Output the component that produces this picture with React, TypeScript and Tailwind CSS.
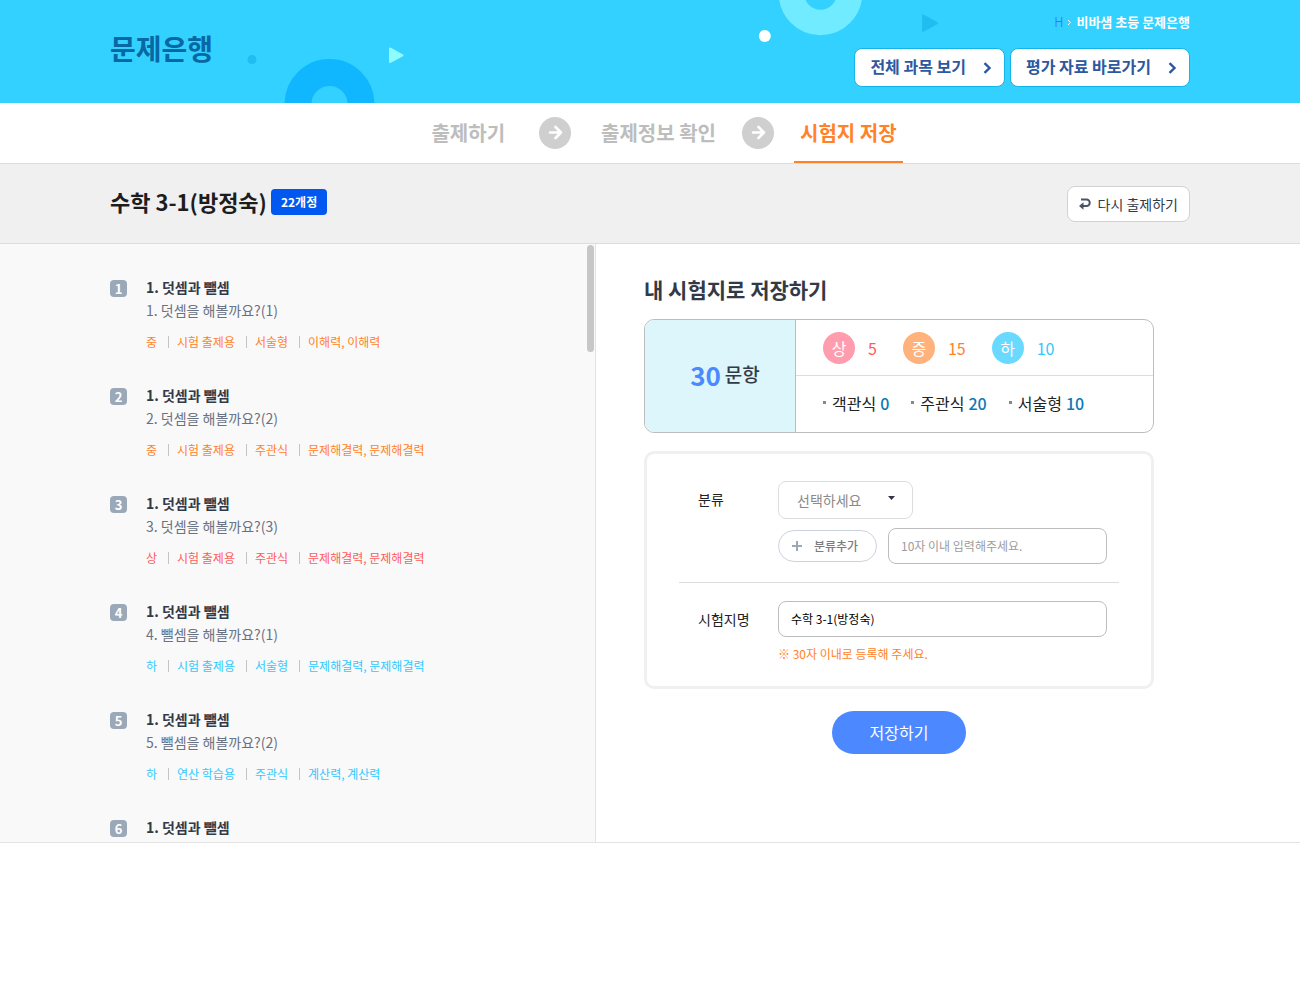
import { useState } from 'react';

type Level = '상' | '중' | '하';

interface Question {
  id: number;
  chapter: string;
  title?: string;
  level?: Level;
  tags?: string[];
}

const questions: Question[] = [
  { id: 1, chapter: '1. 덧셈과 뺄셈', title: '1. 덧셈을 해볼까요?(1)', level: '중', tags: ['시험 출제용', '서술형', '이해력, 이해력'] },
  { id: 2, chapter: '1. 덧셈과 뺄셈', title: '2. 덧셈을 해볼까요?(2)', level: '중', tags: ['시험 출제용', '주관식', '문제해결력, 문제해결력'] },
  { id: 3, chapter: '1. 덧셈과 뺄셈', title: '3. 덧셈을 해볼까요?(3)', level: '상', tags: ['시험 출제용', '주관식', '문제해결력, 문제해결력'] },
  { id: 4, chapter: '1. 덧셈과 뺄셈', title: '4. 뺄셈을 해볼까요?(1)', level: '하', tags: ['시험 출제용', '서술형', '문제해결력, 문제해결력'] },
  { id: 5, chapter: '1. 덧셈과 뺄셈', title: '5. 뺄셈을 해볼까요?(2)', level: '하', tags: ['연산 학습용', '주관식', '계산력, 계산력'] },
  { id: 6, chapter: '1. 덧셈과 뺄셈' },
];

const levelText: Record<Level, string> = {
  상: 'text-[#ff5c5c]',
  중: 'text-[#ff8229]',
  하: 'text-[#32c8ff]',
};

const levelBadge: Record<Level, string> = {
  상: 'bg-[#ff9dae]',
  중: 'bg-[#ffb27c]',
  하: 'bg-[#69d9ff]',
};

const levelCounts: { level: Level; count: number }[] = [
  { level: '상', count: 5 },
  { level: '중', count: 15 },
  { level: '하', count: 10 },
];

const typeCounts = [
  { name: '객관식', count: 0 },
  { name: '주관식', count: 20 },
  { name: '서술형', count: 10 },
];

// 헤더 배경 도형
function HeaderShapes() {
  return (
    <svg
      className="absolute left-1/2 top-0 -translate-x-1/2"
      width="1300"
      height="103"
      viewBox="0 0 1300 103"
      aria-hidden="true"
    >
      <circle cx="252" cy="59.5" r="4.5" fill="#1fbdf0" />
      <circle cx="329.5" cy="104" r="31.5" fill="none" stroke="#10b7ff" strokeWidth="27" />
      <path d="M390 48.5v13.5l12.5-6.7z" fill="#8ffbff" stroke="#8ffbff" strokeWidth="2" strokeLinejoin="round" />
      <circle cx="764.8" cy="36" r="6" fill="#fff" />
      <circle cx="820.5" cy="-6.5" r="29" fill="none" stroke="#70ebff" strokeWidth="25.5" />
      <path d="M923 15.5v15.5l14-7.8z" fill="#1fbdf0" stroke="#1fbdf0" strokeWidth="2" strokeLinejoin="round" />
    </svg>
  );
}

function HeaderButton({ label }: { label: string }) {
  return (
    <button
      type="button"
      className="flex h-[39px] items-center gap-[17px] rounded-lg border border-[#14b4e8] bg-white pl-[15px] pr-3 text-base leading-5 font-bold text-[#2d58a0]"
    >
      <span className="pb-[3px]">{label}</span>
      <svg width="9" height="12" viewBox="0 0 9 12" fill="none" aria-hidden="true">
        <path d="M1.5 1.2 6.5 6l-5 4.8" stroke="currentColor" strokeWidth="2.4" />
      </svg>
    </button>
  );
}

function StepArrow({ className }: { className: string }) {
  return (
    <svg className={className} width="32" height="32" viewBox="0 0 32 32" fill="none" aria-hidden="true">
      <circle cx="16" cy="16" r="16" fill="#cfcfcf" />
      <path
        d="M11 15.5h11M16.5 10l5.5 5.5-5.5 5.5"
        stroke="#fff"
        strokeWidth="2.6"
        strokeLinecap="round"
        strokeLinejoin="round"
      />
    </svg>
  );
}

function QuestionItem({ item }: { item: Question }) {
  return (
    <li className="flex h-[108px] items-start gap-[19px]">
      <span className="mt-1 flex h-[17px] w-[17px] shrink-0 items-center justify-center rounded bg-[#9aa8b8] text-[13px] font-bold leading-none text-white">
        {item.id}
      </span>
      <div>
        <strong className="block text-sm leading-[22px] font-bold text-[#333a47]">{item.chapter}</strong>
        {item.title && <p className="text-sm leading-6 text-[#6a7182]">{item.title}</p>}
        {item.level && (
          <ul className={`mt-[10px] flex items-center text-xs leading-5 ${levelText[item.level]}`}>
            <li>{item.level}</li>
            {item.tags?.map((tag) => (
              <li key={tag} className="flex items-center">
                <i className="ml-[11px] mr-2 h-3 w-px bg-[#c4c4c4]" />
                {tag}
              </li>
            ))}
          </ul>
        )}
      </div>
    </li>
  );
}

function App() {
  const [group, setGroup] = useState('');
  const [newGroup, setNewGroup] = useState('');
  const [paperName, setPaperName] = useState('수학 3-1(방정숙)');

  return (
    <div className="min-h-screen bg-white font-['Noto_Sans_CJK_KR',sans-serif] text-[#222]">
      <header className="relative overflow-hidden bg-[#33d1ff]">
        <HeaderShapes />
        <div className="relative mx-auto flex h-[103px] max-w-[1080px] justify-between">
          <h1 className="pt-7 text-[28px] leading-10 font-bold text-[#0768a3]">문제은행</h1>
          <div className="flex flex-col items-end pt-3">
            <nav className="flex items-center gap-1 text-[13px] leading-5" aria-label="현재 위치">
              <a href="#home" className="font-light text-[#2d6df6]">H</a>
              <svg width="5" height="7" viewBox="0 0 5 7" fill="none" aria-hidden="true">
                <path d="M1 1l2.5 2.5L1 6" stroke="#fff" />
              </svg>
              <a href="#bank" className="font-bold text-white">비바샘 초등 문제은행</a>
            </nav>
            <div className="mt-4 flex gap-[5px]">
              <HeaderButton label="전체 과목 보기" />
              <HeaderButton label="평가 자료 바로가기" />
            </div>
          </div>
        </div>
      </header>

      <ol className="flex h-[61px] items-stretch justify-center border-b border-[#ddd] pl-7 text-xl font-bold text-[#bdbdbd]">
        <li className="flex items-center px-1.5">출제하기</li>
        <li className="flex items-center">
          <StepArrow className="ml-7 mr-6" />
        </li>
        <li className="flex items-center px-1.5">출제정보 확인</li>
        <li className="flex items-center">
          <StepArrow className="mx-5" />
        </li>
        <li className="flex items-center border-b-2 border-[#ff8229] px-1.5 pt-0.5 text-[#ff8229]" aria-current="step">
          시험지 저장
        </li>
      </ol>

      <div className="border-b border-[#ddd] bg-[#f0f0f0]">
        <div className="mx-auto flex h-[79px] max-w-[1080px] items-center justify-between">
          <div className="flex items-center gap-1 pb-1">
            <h2 className="text-[22px] font-bold text-[#1d1d1d]">수학 3-1(방정숙)</h2>
            <span className="rounded bg-[#0058f0] px-2.5 text-xs leading-[26px] font-bold text-white">22개정</span>
          </div>
          <button
            type="button"
            className="flex h-9 items-center gap-[7px] rounded-lg border border-[#d2d2d2] bg-white px-[11px] text-sm text-[#333a47]"
          >
            <svg width="12" height="12" viewBox="0 0 12 12" fill="none" aria-hidden="true">
              <path d="M2 1.5h5.5a3 3 0 0 1 0 6.5H3" stroke="#4a5265" strokeWidth="2" />
              <path d="M0 8l4.5-3.8v7.6z" fill="#4a5265" />
            </svg>
            다시 출제하기
          </button>
        </div>
      </div>

      <main className="grid grid-cols-[minmax(0,596fr)_minmax(0,704fr)] border-b border-[#e3e3e3]">
        <section className="relative border-r border-[#e3e3e3] bg-[#f9f9f9]" aria-label="문항 목록">
          <ul className="h-[598px] overflow-y-auto pl-[max(20px,calc(50vw-540px))] pt-8 [scrollbar-width:none]">
            {questions.map((item) => (
              <QuestionItem key={item.id} item={item} />
            ))}
          </ul>
          <div className="absolute right-px top-px h-[107px] w-[7px] rounded-full bg-[#c7c7c7]" />
        </section>

        <section className="max-w-[558px] pl-12 pt-8">
          <h3 className="text-[21px] leading-[26px] font-bold text-[#333a47]">내 시험지로 저장하기</h3>

          <div className="mt-[17px] flex overflow-hidden rounded-[10px] border border-[#bdbdbd]">
            <div className="flex w-[151px] items-center justify-center gap-1 border-r border-[#bdbdbd] bg-[#dcf6fb] pb-1 pl-2.5 text-[19px] font-medium text-[#333a47]">
              <strong className="text-[26px] font-bold text-[#4c88ff]">30</strong>
              문항
            </div>
            <div className="flex-1">
              <ul className="flex h-14 items-center gap-[26px] border-b border-[#ddd] pl-[27px] leading-[22px]">
                {levelCounts.map(({ level, count }) => (
                  <li key={level} className={`flex items-center gap-[13px] ${levelText[level]}`}>
                    <span className={`flex h-8 w-8 items-center justify-center rounded-full text-white ${levelBadge[level]}`}>
                      {level}
                    </span>
                    {count}
                  </li>
                ))}
              </ul>
              <ul className="flex h-14 items-center gap-[22px] pb-0.5 pl-[27px]">
                {typeCounts.map(({ name, count }) => (
                  <li key={name} className="flex items-center">
                    <i className="mr-1.5 mb-0.5 h-[3px] w-[3px] bg-[#888]" />
                    {name}
                    <span className="ml-1 font-medium text-[#0a7ab5]">{count}</span>
                  </li>
                ))}
              </ul>
            </div>
          </div>

          <form onSubmit={(e) => e.preventDefault()}>
            <div className="mt-[18px] rounded-[10px] border-[3px] border-[#f0f0f0] px-8 text-sm">
              <div className="flex border-b border-[#ddd] pb-[18px] pl-[19px] pr-3 pt-[27px]">
                <label htmlFor="group" className="w-20 shrink-0 leading-9">분류</label>
                <div className="flex-1">
                  <div className="relative w-[135px]">
                    <select
                      id="group"
                      value={group}
                      onChange={(e) => setGroup(e.target.value)}
                      className="h-[38px] w-full appearance-none rounded-lg border border-[#ddd] bg-white pl-[18px] text-sm text-[#8a8a8a]"
                    >
                      <option value="">선택하세요</option>
                    </select>
                    <svg
                      className="pointer-events-none absolute right-[18px] top-[15px]"
                      width="7"
                      height="4"
                      viewBox="0 0 7 4"
                      aria-hidden="true"
                    >
                      <path d="M0 0h7L3.5 4z" fill="#333344" />
                    </svg>
                  </div>
                  <div className="mt-[9px] flex items-center gap-[11px]">
                    <button
                      type="button"
                      className="flex h-8 w-[99px] shrink-0 items-center gap-3 rounded-full border border-[#ccd3e0] bg-white pl-[13px] text-xs font-medium text-[#7c7c7c]"
                    >
                      <svg width="10" height="10" viewBox="0 0 10 10" aria-hidden="true">
                        <path d="M5 0v10M0 5h10" stroke="#9aa8b8" strokeWidth="2" />
                      </svg>
                      분류추가
                    </button>
                    <input
                      type="text"
                      aria-label="분류 이름"
                      maxLength={10}
                      placeholder="10자 이내 입력해주세요."
                      value={newGroup}
                      onChange={(e) => setNewGroup(e.target.value)}
                      className="h-9 min-w-0 flex-1 rounded-lg border border-[#bdbdbd] px-3 pb-0.5 text-xs placeholder:text-[#9c9c9c]"
                    />
                  </div>
                </div>
              </div>
              <div className="flex pb-[22px] pl-[19px] pr-3 pt-[18px]">
                <label htmlFor="paperName" className="w-20 shrink-0 leading-9">시험지명</label>
                <div className="flex-1">
                  <input
                    id="paperName"
                    type="text"
                    maxLength={30}
                    value={paperName}
                    onChange={(e) => setPaperName(e.target.value)}
                    className="h-9 w-full rounded-lg border border-[#bdbdbd] px-3 pb-0.5 text-xs text-black"
                  />
                  <p className="mt-[7px] text-xs leading-5 text-[#ff8229]">※ 30자 이내로 등록해 주세요.</p>
                </div>
              </div>
            </div>
            <button
              type="submit"
              className="mx-auto mt-[22px] block h-[43px] w-[134px] rounded-full bg-[#4c88ff] pb-0.5 text-base text-white"
            >
              저장하기
            </button>
          </form>
        </section>
      </main>
    </div>
  );
}

export default App;
